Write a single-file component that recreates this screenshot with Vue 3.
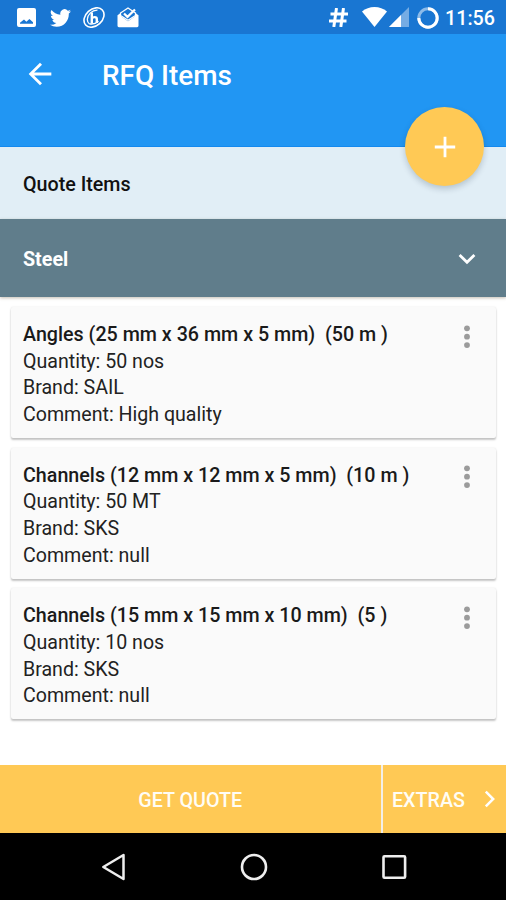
<script setup>
const items = [
  { title: 'Angles (25 mm x 36 mm x 5 mm)  (50 m )', quantity: '50 nos', brand: 'SAIL', comment: 'High quality' },
  { title: 'Channels (12 mm x 12 mm x 5 mm)  (10 m )', quantity: '50 MT', brand: 'SKS', comment: 'null' },
  { title: 'Channels (15 mm x 15 mm x 10 mm)  (5 )', quantity: '10 nos', brand: 'SKS', comment: 'null' },
]
</script>

<template>
  <div class="screen">
    <div class="status">
      <div class="notifications">
        <svg width="19" height="19" viewBox="0 0 19 19"><path fill="#fff" fill-rule="evenodd" d="M2 0h15q2 0 2 2v15q0 2-2 2H2q-2 0-2-2V2Q0 0 2 0zM3 15.800h13v-1.600L12.400 11l-3 2.700L7 11.500l-4 3.300z" /></svg>
        <svg width="21" height="18" viewBox="0 2 24 20" preserveAspectRatio="none"><path fill="#fff" d="M24 4.600a10 10 0 0 1-2.800.8 5 5 0 0 0 2.200-2.700c-1 .6-2 1-3.100 1.200a4.900 4.900 0 0 0-8.400 4.500C7.700 8.100 4.100 6.100 1.700 3.100a4.900 4.900 0 0 0 1.500 6.600c-.8 0-1.600-.2-2.200-.6v.1c0 2.300 1.700 4.300 3.900 4.800-.7.200-1.500.2-2.200.1.600 2 2.400 3.400 4.600 3.400A9.900 9.900 0 0 1 0 19.500a14 14 0 0 0 7.500 2.200c9.100 0 14-7.500 14-14v-.6A10 10 0 0 0 24 4.600z" /></svg>
        <svg width="22" height="21" viewBox="0 0 22 21" fill="none" stroke="#fff">
          <ellipse cx="11" cy="10.500" rx="11.200" ry="8.300" transform="rotate(-42 11 10.500)" stroke-width="1.600" />
          <path d="M14.500 3.200C9 3 4.500 7.500 4.300 12.500c0 2 .8 3.500 2.200 4.500" stroke-width="1.300" />
          <path d="M8.800 5.500v11M8.800 11.500c1-1.700 5-2 5 .5v4" stroke-width="2.400" />
          <path d="M6.500 16.800q5 1 9-2.500" stroke-width="1.400" />
        </svg>
        <svg width="22" height="21" viewBox="0 0 22 21">
          <path fill="#fff" d="M.5 8.200 4 5.700v3.500l7 5 7-5V5.700l3.500 2.500v10.600q0 1.400-1.400 1.400H1.900Q.5 20.200.5 18.800z" />
          <path fill="none" stroke="#fff" stroke-width="1.300" d="M3.500 8.500V6L11 1l7.500 5v2.500L11 13.300z" />
          <path fill="none" stroke="#fff" stroke-width="2.200" d="m7 6.500 3.500 3.400 7.500-7.400" />
        </svg>
      </div>
      <div class="system">
        <svg class="hash" width="19" height="19" viewBox="0 0 19 19" fill="none" stroke="#fff" stroke-width="3"><path d="M7.500 0 4.800 19M14.500 0l-2.700 19M1.500 6H19M0 13h17.500" /></svg>
        <svg class="wifi" width="25" height="20" viewBox="0 0 26 20" preserveAspectRatio="none"><path fill="#fff" d="M0 4.500Q5.500 0 13 0t13 4.500L13 20z" /></svg>
        <svg class="signal" width="20" height="20" viewBox="0 0 20 20"><path fill="#fff" fill-opacity=".4" d="M20 0v20H0z" /><path fill="#fff" d="M12 8v12H0z" /></svg>
        <svg class="battery" width="22" height="22" viewBox="0 0 22 22" fill="none" stroke="#fff" stroke-width="3"><circle cx="11" cy="11" r="9.200" stroke-opacity=".5" /><path d="M11 1.800A9.200 9.200 0 1 1 1.800 11" /></svg>
        <span class="time">11:56</span>
      </div>
    </div>

    <header class="toolbar">
      <svg class="back" width="34" height="34" viewBox="0 0 24 24"><path fill="#fff" d="M20 11H7.830l5.590-5.590L12 4l-8 8 8 8 1.410-1.410L7.830 13H20v-2z" /></svg>
      <h1>RFQ Items</h1>
      <button class="fab" aria-label="Add">
        <svg width="22" height="22" viewBox="0 0 22 22"><path d="M11 .8v20.400M.8 11h20.400" stroke="#fff" stroke-width="2.800" /></svg>
      </button>
    </header>

    <div class="section"><span>Quote Items</span></div>
    <div class="group">
      <span>Steel</span>
      <svg width="18" height="12" viewBox="0 0 18 12"><path d="m1.600 2 7.400 7.300L16.400 2" fill="none" stroke="#fff" stroke-width="2.800" /></svg>
    </div>

    <main class="list">
      <article v-for="item in items" :key="item.title" class="card">
        <div class="details">
          <h2>{{ item.title }}</h2>
          <p>Quantity: {{ item.quantity }}</p>
          <p>Brand: {{ item.brand }}</p>
          <p>Comment: {{ item.comment }}</p>
        </div>
        <svg class="more" width="6" height="24" viewBox="0 0 6 24" fill="#9b9b9b"><circle cx="3" cy="3.300" r="2.900" /><circle cx="3" cy="11.700" r="2.900" /><circle cx="3" cy="20.100" r="2.900" /></svg>
      </article>
    </main>

    <div class="actions">
      <button class="quote"><span>GET QUOTE</span></button>
      <button class="extras">
        <span>EXTRAS</span>
        <svg width="12" height="18" viewBox="0 0 12 18"><path d="m1.800 1.600 7.400 7.400-7.400 7.400" fill="none" stroke="#fff" stroke-width="2.500" /></svg>
      </button>
    </div>

    <nav class="nav">
      <svg width="26" height="28" viewBox="0 0 26 28"><path d="M23.500 2v24L3.300 14z" fill="none" stroke="#eee" stroke-width="2.500" stroke-linejoin="round" /></svg>
      <svg width="28" height="28" viewBox="0 0 28 28"><circle cx="14" cy="14" r="12" fill="none" stroke="#eee" stroke-width="2.600" /></svg>
      <svg width="26" height="26" viewBox="0 0 26 26"><rect x="2.500" y="2.200" width="21.600" height="21.600" rx="1" fill="none" stroke="#eee" stroke-width="2.600" /></svg>
    </nav>
  </div>
</template>

<style>
body {
  margin: 0;
}
</style>

<style scoped>
.screen {
  width: 506px;
  height: 900px;
  display: flex;
  flex-direction: column;
  background: #fff;
  font-family: Roboto, sans-serif;
  font-size: 19.7px;
  overflow: hidden;
}
svg {
  display: block;
  flex: none;
}
h1, h2, p {
  margin: 0;
}
button {
  border: 0;
  padding: 0;
  font: inherit;
  color: inherit;
}
.status {
  height: 34px;
  flex: none;
  display: flex;
  justify-content: space-between;
  align-items: center;
  background: #1976d2;
  color: #fff;
  padding: 0 12px 0 16.500px;
}
.notifications {
  display: flex;
  align-items: center;
  gap: 12px;
}
.notifications svg {
  margin-top: 1px;
}
.notifications svg:first-child {
  margin-right: 2px;
}
.system {
  display: flex;
  align-items: center;
}
.hash {
  margin-top: 1px;
}
.wifi {
  margin-left: 14px;
}
.signal {
  margin-left: 2.500px;
}
.battery {
  margin: 1px 6px 0 8px;
}
.time {
  width: 49px;
  white-space: nowrap;
  font-weight: 500;
  line-height: 34px;
  margin-top: 3px;
}
.toolbar {
  height: 112.500px;
  flex: none;
  box-sizing: border-box;
  position: relative;
  display: flex;
  align-items: flex-start;
  background: #2196f3;
  border-bottom: 1px solid #1489ee;
  color: #fff;
  padding: 23px 23px 0;
}
h1 {
  margin: 1px 0 0 45px;
  font-size: 27.900px;
  line-height: 36px;
  font-weight: 500;
}
.fab {
  position: absolute;
  right: 22px;
  bottom: -40.500px;
  width: 79px;
  height: 79px;
  border-radius: 50%;
  background: #ffc955;
  display: flex;
  align-items: center;
  justify-content: center;
  box-shadow: 0 3px 6px rgba(0, 30, 50, 0.2);
}
.section {
  height: 72px;
  flex: none;
  display: flex;
  align-items: center;
  padding: 3px 23px 0;
  box-sizing: border-box;
  background: #e1eef6;
  color: #111;
  font-weight: 500;
}
.group {
  height: 78.500px;
  flex: none;
  display: flex;
  align-items: center;
  justify-content: space-between;
  padding: 2px 30px 0 23px;
  box-sizing: border-box;
  background: #607d8b;
  color: #fff;
  font-weight: 700;
  box-shadow: 0 1px 3px rgba(90, 70, 40, 0.35);
}
.group span {
  margin-top: 2px;
}
.list {
  flex: 1;
  display: flex;
  flex-direction: column;
  gap: 9.600px;
  padding: 10px 10px 0 11px;
}
.card {
  height: 131px;
  box-sizing: border-box;
  display: flex;
  justify-content: space-between;
  background: #fafafa;
  border-radius: 2px;
  padding: 15px 26px 0 12px;
  box-shadow: 0 2px 2px rgba(0, 0, 0, 0.22), 0 0 2px rgba(0, 0, 0, 0.1);
  color: #222;
  line-height: 26.700px;
  font-size: 19.600px;
}
h2 {
  font-size: 19.700px;
  font-weight: 500;
  white-space: pre;
  color: #1a1a1a;
}
.more {
  margin-top: 2.500px;
}
.actions {
  height: 68px;
  flex: none;
  display: flex;
  gap: 2.500px;
  background: #f3efe8;
  color: #fffdf5;
  font-weight: 500;
}
.actions button {
  background: #ffc955;
  display: flex;
  align-items: center;
}
.quote {
  flex: 1;
  justify-content: center;
}
.extras {
  width: 123px;
  box-sizing: border-box;
  justify-content: space-between;
}
.actions .extras {
  padding: 0 10px 0 9px;
}
.actions span {
  margin-top: 2px;
}
.nav {
  height: 67px;
  flex: none;
  box-sizing: border-box;
  display: flex;
  align-items: center;
  justify-content: space-between;
  background: #000;
  padding: 0 99px 0 100px;
}
</style>
